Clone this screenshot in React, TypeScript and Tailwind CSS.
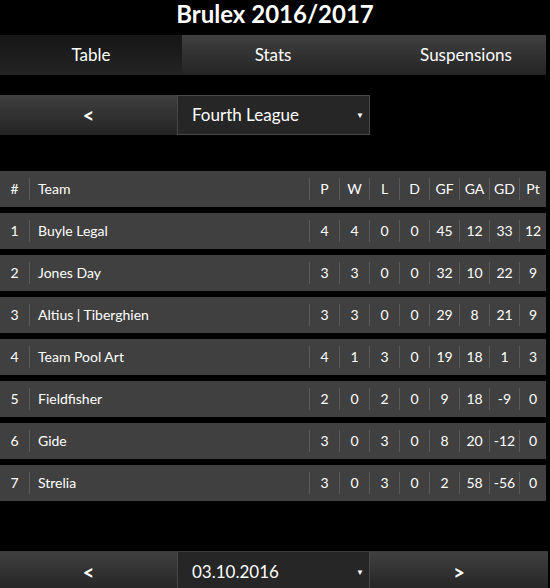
import React from 'react';

const rows = [
  [1, 'Buyle Legal', 4, 4, 0, 0, 45, 12, 33, 12],
  [2, 'Jones Day', 3, 3, 0, 0, 32, 10, 22, 9],
  [3, 'Altius | Tiberghien', 3, 3, 0, 0, 29, 8, 21, 9],
  [4, 'Team Pool Art', 4, 1, 3, 0, 19, 18, 1, 3],
  [5, 'Fieldfisher', 2, 0, 2, 0, 9, 18, -9, 0],
  [6, 'Gide', 3, 0, 3, 0, 8, 20, -12, 0],
  [7, 'Strelia', 3, 0, 3, 0, 2, 58, -56, 0],
];

const cols = 'grid grid-cols-[29px_280px_repeat(7,30px)_27px] items-center';

function TableRow({ cells }: { cells: (string | number)[] }) {
  const [num, team, ...stats] = cells;
  return (
    <div className={`${cols} h-9 bg-[#404040] text-[14px] text-white`}>
      <div className="text-center leading-[22px]">{num}</div>
      <div className="border-l border-[#5a5a5a] pl-[8px] leading-[22px]">{team}</div>
      {stats.map((s, i) => (
        <div key={i} className="border-l border-[#5a5a5a] text-center leading-[22px]">
          {s}
        </div>
      ))}
    </div>
  );
}

function Arrow() {
  return <span className="ml-auto mr-[5px] text-[8px] leading-none text-white">▼</span>;
}

export default function App() {
  return (
    <div className="h-[588px] w-[550px] overflow-hidden bg-black font-['Lato',sans-serif] text-white">
      <h1 className="h-[35px] text-center text-[24px] font-bold leading-[28px]">Brulex 2016/2017</h1>

      <div className="grid h-10 w-[546px] grid-cols-3 text-[17px]">
        <div className="flex items-center justify-center bg-gradient-to-b from-[#161616] to-[#242424]">Table</div>
        <div className="flex items-center justify-center bg-gradient-to-b from-[#404040] to-[#242424]">Stats</div>
        <div className="flex items-center justify-center bg-gradient-to-b from-[#404040] to-[#242424] pl-[22px]">Suspensions</div>
      </div>

      <div className="mt-5 flex h-10 text-[17px]">
        <div className="flex w-[177px] items-center justify-center bg-gradient-to-b from-[#404040] to-[#242424] text-[20px] font-bold">&lt;</div>
        <div className="flex w-[193px] items-center border border-[#474747] bg-[#262626] pl-[14px]">
          Fourth League
          <Arrow />
        </div>
      </div>

      <div className="mt-[36px] flex w-[546px] flex-col gap-[6px]">
        <TableRow cells={['#', 'Team', 'P', 'W', 'L', 'D', 'GF', 'GA', 'GD', 'Pt']} />
        {rows.map((r) => (
          <TableRow key={r[0]} cells={r} />
        ))}
      </div>

      <div className="mt-[50px] flex h-10 w-[548px] border-t border-[#3a3a3a] text-[17px]">
        <div className="flex w-[177px] items-center justify-center bg-gradient-to-b from-[#404040] to-[#242424] text-[20px] font-bold">&lt;</div>
        <div className="flex w-[193px] items-center border-x border-[#474747] bg-[#262626] pl-[14px]">
          03.10.2016
          <Arrow />
        </div>
        <div className="flex flex-1 items-center justify-center bg-gradient-to-b from-[#404040] to-[#242424] text-[20px] font-bold">&gt;</div>
      </div>
    </div>
  );
}
